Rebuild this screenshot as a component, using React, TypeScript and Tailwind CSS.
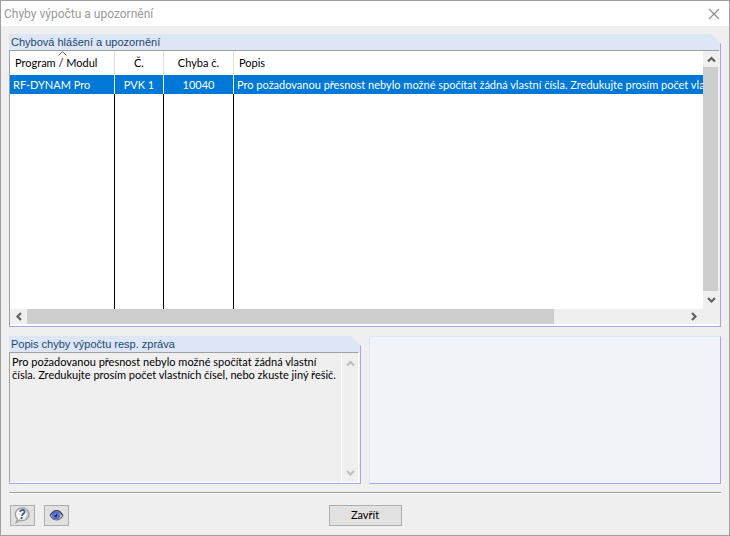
import React from 'react';

type Direction = 'up' | 'down' | 'left' | 'right';

interface ErrorRow {
  module: string;
  caseNo: string;
  code: string;
  description: string;
}

const MESSAGE =
  'Pro požadovanou přesnost nebylo možné spočítat žádná vlastní čísla. Zredukujte prosím počet vlastních čísel, nebo zkuste jiný řešič.';

const ROWS: ErrorRow[] = [
  { module: 'RF-DYNAM Pro', caseNo: 'PVK 1', code: '10040', description: MESSAGE },
];

const CHEVRONS: Record<Direction, string> = {
  up: 'M1 6.5 L4.5 3 L8 6.5',
  down: 'M1 3 L4.5 6.5 L8 3',
  left: 'M6 1 L2.5 4.5 L6 8',
  right: 'M2 1 L5.5 4.5 L2 8',
};

const LABELS: Record<Direction, string> = {
  up: 'Nahoru',
  down: 'Dolů',
  left: 'Doleva',
  right: 'Doprava',
};

const ScrollButton: React.FC<{ direction: Direction; disabled?: boolean }> = ({ direction, disabled }) => (
  <button
    type="button"
    aria-label={LABELS[direction]}
    disabled={disabled}
    className={`flex h-4 w-4 shrink-0 items-center justify-center ${disabled ? 'text-[#bfbfbf]' : 'text-[#606060]'}`}
  >
    <svg width="9" height="9" viewBox="0 0 9 9" fill="none" stroke="currentColor" strokeWidth="2.2">
      <path d={CHEVRONS[direction]} />
    </svg>
  </button>
);

// Panel with a bevelled top right corner
const Panel: React.FC<{ title: string; titleId: string; children: React.ReactNode }> = ({
  title,
  titleId,
  children,
}) => (
  <section
    aria-labelledby={titleId}
    className="flex min-w-0 flex-col border-r border-b border-[#a6a6ec] [clip-path:polygon(0_0,calc(100%_-_10px)_0,100%_10px,100%_100%,0_100%)]"
  >
    <h2
      id={titleId}
      className="h-4 bg-[#dce6f4] px-0.5 font-['Liberation_Sans',Arial,sans-serif] text-[11px] leading-4 text-[#1c4675]"
    >
      {title}
    </h2>
    {children}
  </section>
);

const HelpIcon = () => (
  <svg width="17" height="17" viewBox="0 0 17 17">
    <path
      d="M8.2 1 C12 1 15 3.6 15 7.2 C15 10.9 12 13.6 8.4 13.6 C7.4 13.6 6.5 13.5 5.7 13.1 L2.4 15.3 L3.4 11.9 C2 10.8 1.3 9.2 1.3 7.3 C1.3 3.6 4.4 1 8.2 1 Z"
      fill="#f7f7f7"
      stroke="#a3a3a3"
      strokeWidth="1.5"
    />
    <path d="M12 3.2 C14.2 5.6 14 9.8 11 12" fill="none" stroke="#c6c6c6" strokeWidth="1.6" />
    <path
      d="M5.8 4.8 C6.2 3.3 7.4 3 8.6 3 C10.2 3 10.9 3.9 10.5 5.2 C10.1 6.8 8.2 7 7.9 8.9"
      fill="none"
      stroke="#4a5c94"
      strokeWidth="1.9"
    />
    <rect x="6.6" y="10" width="2" height="2" fill="#4a5c94" />
  </svg>
);

const EyeIcon = () => (
  <svg width="15" height="13" viewBox="0 0 15 13">
    <path d="M1 6.5 C3.5 2.5 5.5 1.6 7.5 1.6 C9.5 1.6 11.5 2.5 14 6.5 C11.5 10.2 9.5 11 7.5 11 C5.5 11 3.5 10.2 1 6.5 Z" fill="#c2c2c8" />
    <path d="M1 6.7 C3.2 3 5 1.7 7.5 1.7 C10 1.7 11.8 3 14 6.7" fill="none" stroke="#3c3c3c" strokeWidth="1.3" />
    <path d="M1.2 6.7 C3.4 10 5.2 11 7.5 11 C9.8 11 11.6 10 13.8 6.7" fill="none" stroke="#6b6b6b" strokeWidth="1.1" />
    <circle cx="7" cy="6.4" r="3.7" fill="#4d70ec" stroke="#3450b8" strokeWidth="0.5" />
    <circle cx="6.8" cy="6.4" r="1.3" fill="#0c1230" />
    <circle cx="6.2" cy="5.6" r="0.6" fill="#dfe6ff" />
  </svg>
);

const headCell = 'relative h-6 border-r border-[#e0e0e0] p-0 font-normal';
const rowCell = 'h-[19px] border-r border-white p-0 pt-px';

const App: React.FC = () => {
  return (
    <div className="flex min-h-screen flex-col border border-[#a0a0a0] bg-[#efefef] font-['Lato',Tahoma,sans-serif] text-[11px] text-black">
      <header className="flex h-[25px] items-center justify-between bg-white pr-[9px] pl-[3px]">
        <h1 className="font-['Roboto','Segoe_UI',sans-serif] text-xs text-[#999999]">Chyby výpočtu a upozornění</h1>
        <button type="button" aria-label="Zavřít okno" className="text-[#8a8a8a]">
          <svg width="12" height="12" viewBox="0 0 12 12" stroke="currentColor" strokeWidth="1.1">
            <path d="M1 1 L11 11 M11 1 L1 11" />
          </svg>
        </button>
      </header>

      <main className="flex flex-col px-2 pt-2">
        <Panel title="Chybová hlášení a upozornění" titleId="errors-title">
          <div className="mr-px flex flex-col border-t border-l border-[#a0a0a0]">
            <div className="flex h-[258px] bg-white">
              <div className="min-w-0 flex-1 overflow-hidden">
                <table className="h-full w-full table-fixed border-separate border-spacing-0">
                  <colgroup>
                    <col className="w-[105px]" />
                    <col className="w-[49px]" />
                    <col className="w-[70px]" />
                    <col />
                  </colgroup>
                  <thead>
                    <tr>
                      <th className={`${headCell} pl-[5px] text-left`}>
                        <svg className="absolute top-0 left-12" width="9" height="5" viewBox="0 0 9 5" fill="none" stroke="#606060">
                          <path d="M0.5 4.5 L4.5 0.5 L8.5 4.5" />
                        </svg>
                        Program / Modul
                      </th>
                      <th className={headCell}>Č.</th>
                      <th className={headCell}>Chyba č.</th>
                      <th className="h-6 p-0 pl-[5px] text-left font-normal">Popis</th>
                    </tr>
                  </thead>
                  <tbody>
                    {ROWS.map((row) => (
                      <tr key={row.code} className="bg-[#0078d7] text-white">
                        <td className={`${rowCell} pl-[3px]`}>{row.module}</td>
                        <td className={`${rowCell} text-center`}>{row.caseNo}</td>
                        <td className={`${rowCell} text-center`}>{row.code}</td>
                        <td className="h-[19px] overflow-hidden p-0 pt-px pl-[3px] whitespace-nowrap">{row.description}</td>
                      </tr>
                    ))}
                    <tr aria-hidden="true">
                      <td className="h-[215px] border-r border-black p-0" />
                      <td className="border-r border-black p-0" />
                      <td className="border-r border-black p-0" />
                      <td className="p-0" />
                    </tr>
                  </tbody>
                </table>
              </div>
              <div className="flex w-4 flex-col bg-[#efefef]">
                <ScrollButton direction="up" />
                <div className="mr-px flex-1 bg-[#cdcdcd]" />
                <div className="pb-0.5">
                  <ScrollButton direction="down" />
                </div>
              </div>
            </div>
            <div className="flex h-[15px] items-center pr-[17px] pl-px">
              <ScrollButton direction="left" />
              <div className="h-full flex-1">
                <div className="h-full w-4/5 bg-[#cdcdcd]" />
              </div>
              <ScrollButton direction="right" />
            </div>
            <div className="h-0.5 bg-white" />
          </div>
        </Panel>

        <div className="mt-[9px] grid grid-cols-2 gap-2">
          <Panel title="Popis chyby výpočtu resp. zpráva" titleId="detail-title">
            <div className="mr-px flex h-[131px] border-t border-r border-b border-l border-t-[#a0a0a0] border-r-white border-b-white border-l-[#a0a0a0]">
              <textarea
                readOnly
                aria-labelledby="detail-title"
                className="min-w-0 flex-1 resize-none overflow-hidden bg-transparent pt-0.5 pl-0.5 leading-[13px] outline-none"
                value={MESSAGE}
              />
              <div className="flex w-[17px] flex-col justify-between border-l border-white pt-0.5 pb-0.5">
                <ScrollButton direction="up" disabled />
                <ScrollButton direction="down" disabled />
              </div>
            </div>
          </Panel>
          <div className="border border-t-[#dce6f4] border-r-[#a6a6ec] border-b-[#a6a6ec] border-l-[#dce6f4] bg-[#f0f4f9]" />
        </div>
      </main>

      <footer className="mx-2 mt-2 grid grid-cols-[1fr_auto_1fr] border-t border-[#a0a0a0] pt-3 shadow-[inset_0_1px_0_#ffffff]">
        <div className="flex gap-[9px] pl-px">
          <button
            type="button"
            aria-label="Nápověda"
            className="flex h-[21px] w-[25px] items-center justify-center border border-[#adadad] bg-[#e1e1e1]"
          >
            <HelpIcon />
          </button>
          <button
            type="button"
            aria-label="Zobrazit"
            className="flex h-[21px] w-[25px] items-center justify-center border border-[#adadad] bg-[#e1e1e1]"
          >
            <EyeIcon />
          </button>
        </div>
        <button type="button" className="h-[21px] w-[73px] border border-[#adadad] bg-[#e1e1e1]">
          Zavřít
        </button>
      </footer>
    </div>
  );
};

export default App;
